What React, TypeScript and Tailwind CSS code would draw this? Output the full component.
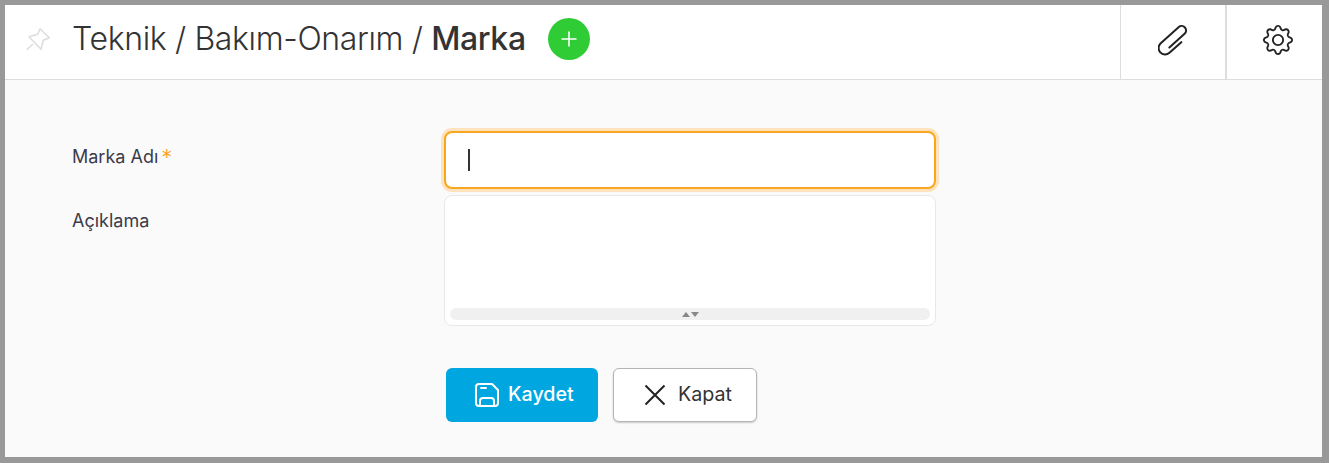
import { BsGear } from "react-icons/bs";

const PinIcon = () => (
  <svg className="ml-[17px] h-[28px] w-[30px] text-[#dddddd]" viewBox="22 24 30 28" fill="none" stroke="currentColor" strokeWidth={1.5} strokeLinejoin="round">
    <path d="M40 27.7 49.3 36.7 43.3 39.3 41 48.3 29 35.7 37.7 33.3Z" />
    <path d="M33 43 26.7 48.8" />
  </svg>
);

const ClipIcon = () => (
  <svg className="ml-[2px] h-[32px] w-[32px] text-[#222222]" viewBox="-16 -16 32 32" fill="none" stroke="currentColor" strokeWidth={2} strokeLinecap="round">
    <path transform="rotate(-42)" d="M4 6.5H-12A6.5 6.5 0 0 1-12-6.5H12A4.5 4.5 0 0 1 12 2.5H-8.5" />
  </svg>
);

const SaveIcon = () => (
  <svg className="h-[26px] w-[26px]" viewBox="-1 -1 26 26" fill="none" stroke="currentColor" strokeWidth={2} strokeLinecap="round" strokeLinejoin="round">
    <path d="M4 1H17L23 7V20A3 3 0 0 1 20 23H4A3 3 0 0 1 1 20V4A3 3 0 0 1 4 1Z" />
    <path d="M6 5H11" />
    <path d="M5 23V18A3 3 0 0 1 8 15H16A3 3 0 0 1 19 18V23" />
  </svg>
);

const CloseIcon = () => (
  <svg className="h-[22px] w-[22px] text-[#222222]" viewBox="0 0 22 22" fill="none" stroke="currentColor" strokeWidth={2}>
    <path d="M1.5 1.5 20.5 20.5M20.5 1.5 1.5 20.5" />
  </svg>
);

const App = () => {
  return (
    <div className="h-[463px] w-[1329px] overflow-hidden border-t-[5px] border-r-[7px] border-b-[6px] border-l-[5px] border-[#999999] bg-[#fafafa] font-['Inter',sans-serif] text-[#333333]">
      {/* Page header */}
      <header className="flex h-[75px] items-stretch border-b border-[#dddddd] bg-white">
        <div className="flex flex-1 items-center pb-[6px]">
          <PinIcon />
          <h1 className="ml-[20px] text-[32px] leading-none font-light tracking-[-0.36px] whitespace-nowrap">
            Teknik / Bakım-Onarım / <span className="font-medium">Marka</span>
          </h1>
          <button className="ml-[22px] flex h-[42px] w-[42px] items-center justify-center rounded-full bg-[#2fcc36] text-white">
            <svg className="h-[18px] w-[18px]" viewBox="0 0 18 18" fill="none" stroke="currentColor" strokeWidth={1.6}>
              <path d="M9 1.5V16.5M1.5 9H16.5" />
            </svg>
          </button>
        </div>
        <button className="flex w-[105px] items-center justify-center border-l border-[#dddddd] pb-[4px]">
          <ClipIcon />
        </button>
        <button className="flex w-[97px] items-center justify-center border-l-2 border-[#dddddd] pb-[4px] pl-[7px] text-[#222222]">
          <BsGear size={30} />
        </button>
      </header>

      {/* Form */}
      <div className="pt-[51px] pl-[67px]">
        <div className="flex">
          <label className="flex w-[372px] items-start gap-[3px] pt-[16px] text-[18px] leading-[20px] text-[#3b3b4a]">
            Marka Adı <span className="text-[22px] font-light text-[#f9a01b]">*</span>
          </label>
          <div className="flex h-[58px] w-[492px] items-center rounded-[8px] border-2 border-[#f9a61f] bg-white pl-[22px] shadow-[0_0_0_3px_#fde3bd]">
            <div className="h-[22px] w-[2px] bg-[#333333]" />
          </div>
        </div>
        <div className="mt-[6px] flex">
          <label className="w-[372px] pt-[16px] text-[18px] leading-[20px] text-[#3b3b4a]">Açıklama</label>
          <div className="flex h-[131px] w-[492px] flex-col justify-end rounded-[8px] border border-[#e8e8e8] bg-white px-[5px] pb-[5px]">
            <div className="flex h-[12px] items-center justify-center gap-[1px] rounded-[6px] bg-[#f0f0f0]">
              <div className="h-0 w-0 border-x-[4px] border-b-[5px] border-x-transparent border-b-[#888888]" />
              <div className="h-0 w-0 border-x-[4px] border-t-[5px] border-x-transparent border-t-[#888888]" />
            </div>
          </div>
        </div>
        <div className="mt-[42px] ml-[374px] flex gap-[15px]">
          <button className="flex h-[54px] w-[152px] items-center gap-[8px] rounded-[6px] bg-[#00a6e0] pl-[28px] text-[19.7px] font-medium text-white">
            <SaveIcon />
            Kaydet
          </button>
          <button className="flex h-[54px] w-[144px] items-center gap-[12px] rounded-[6px] border border-[#b5b5b5] bg-white pl-[30px] text-[19.7px] text-[#333333] shadow-[0_1px_2px_rgba(0,0,0,0.2)]">
            <CloseIcon />
            Kapat
          </button>
        </div>
      </div>
    </div>
  );
};

export default App;
